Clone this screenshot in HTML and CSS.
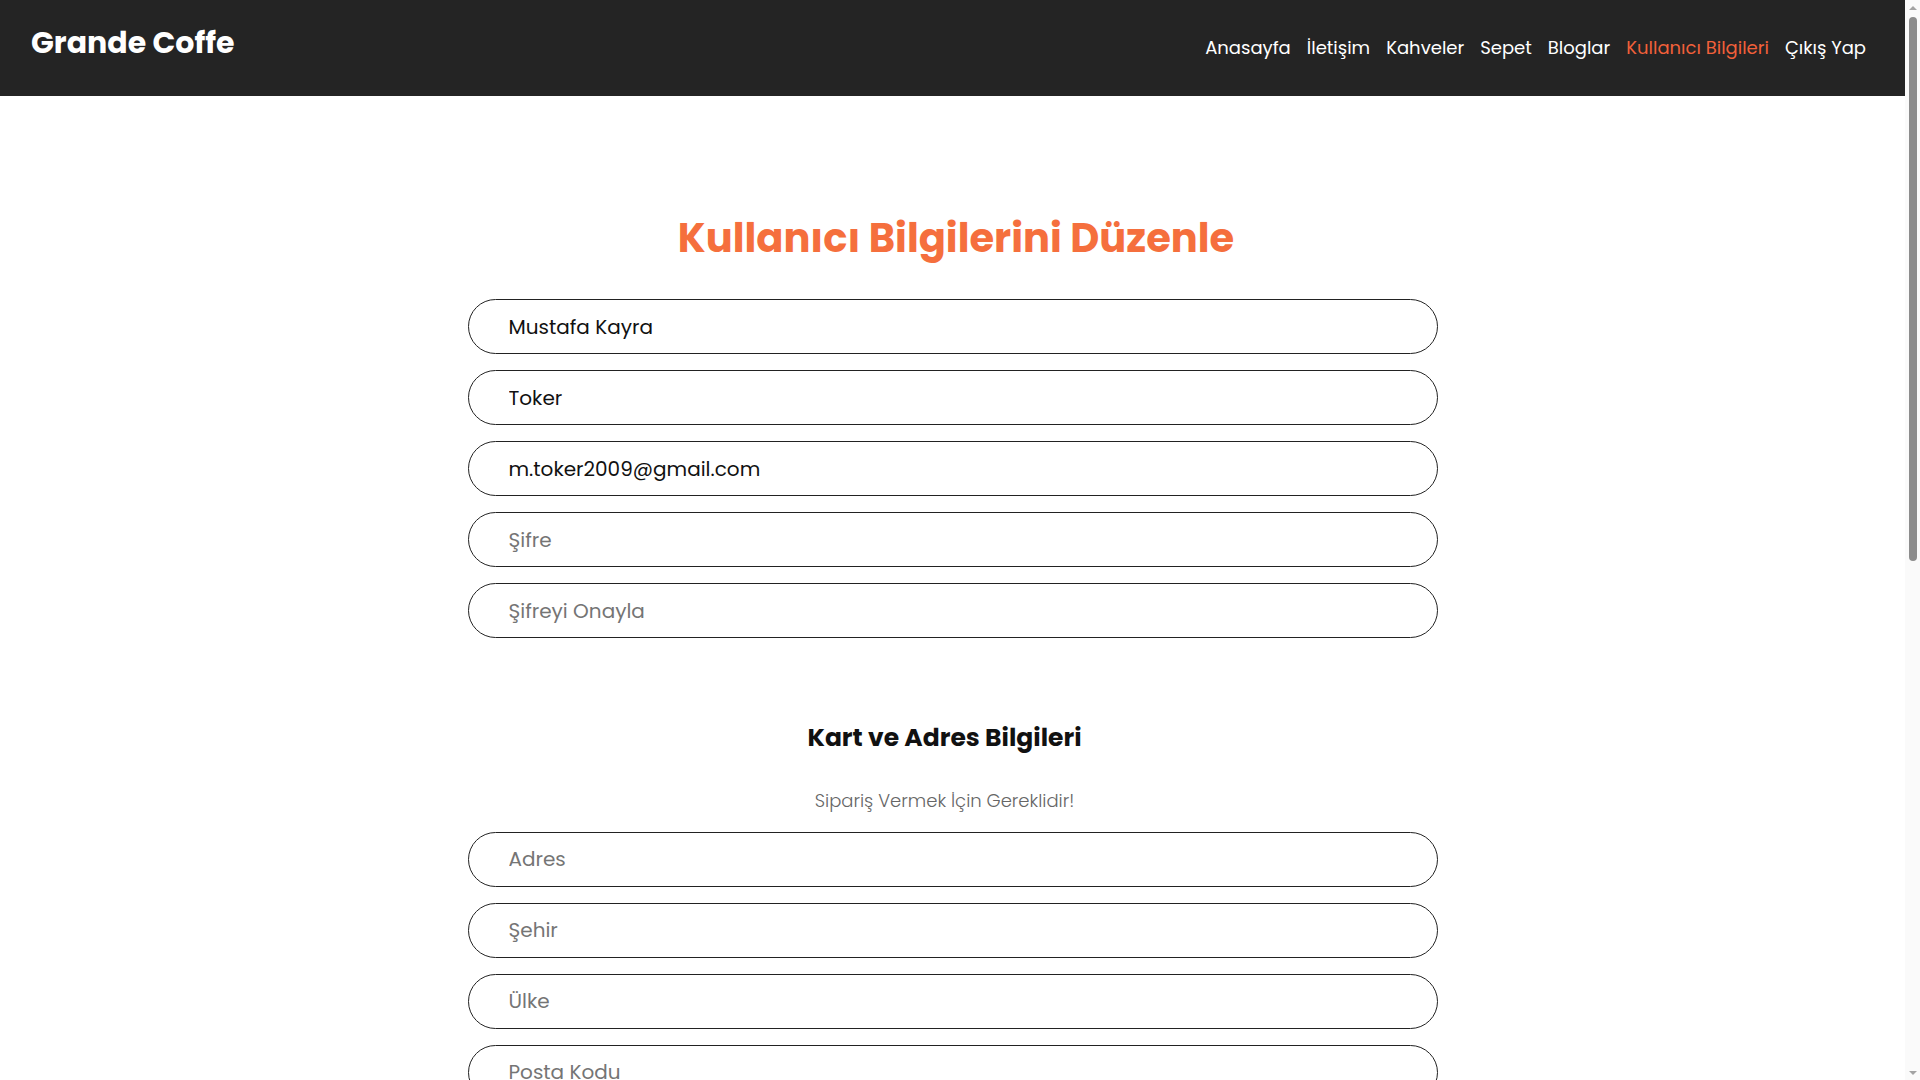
FILE: index.html
```html
<!DOCTYPE html>
<html lang="tr">
<head>
<meta charset="utf-8">
<title>Grande Coffe - Kullanıcı Bilgileri</title>
<link rel="stylesheet" href="styles.css">
</head>
<body>
<header class="topbar">
  <a class="logo" href="#">Grande Coffe</a>
  <nav class="menu">
    <a href="#">Anasayfa</a>
    <a href="#">İletişim</a>
    <a href="#">Kahveler</a>
    <a href="#">Sepet</a>
    <a href="#">Bloglar</a>
    <a href="#" class="active">Kullanıcı Bilgileri</a>
    <a href="#">Çıkış Yap</a>
  </nav>
</header>
<main class="content">
  <h1 class="title">Kullanıcı Bilgilerini Düzenle</h1>
  <form class="form">
    <input class="field" type="text" value="Mustafa Kayra" placeholder="Ad">
    <input class="field" type="text" value="Toker" placeholder="Soyad">
    <input class="field" type="email" value="m.toker2009@gmail.com" placeholder="E-posta">
    <input class="field" type="password" placeholder="Şifre">
    <input class="field" type="password" placeholder="Şifreyi Onayla">

    <h2 class="subtitle">Kart ve Adres Bilgileri</h2>
    <p class="note">Sipariş Vermek İçin Gereklidir!</p>

    <input class="field" type="text" placeholder="Adres">
    <input class="field" type="text" placeholder="Şehir">
    <input class="field" type="text" placeholder="Ülke">
    <input class="field" type="text" placeholder="Posta Kodu">
    <input class="field" type="text" placeholder="Kart Numarası">
    <input class="field" type="text" placeholder="Kart Üzerindeki İsim">
    <input class="field" type="text" placeholder="Son Kullanma Tarihi">
    <input class="field" type="text" placeholder="CVV">
    <button class="submit" type="button">Bilgileri Güncelle</button>
  </form>
</main>
<footer class="footer">
  <p>© 2024 Grande Coffe</p>
</footer>
<div class="scrollbar" aria-hidden="true">
  <span class="sb-arrow sb-up"></span>
  <span class="sb-track"><span class="sb-thumb"></span></span>
  <span class="sb-arrow sb-down"></span>
</div>
</body>
</html>
```

FILE: styles.css
```css
* { box-sizing: border-box; }

html, body {
  margin: 0;
  padding: 0;
}

body {
  font-family: "Poppins", "Inter", "DejaVu Sans", sans-serif;
  background: #ffffff;
  color: #111111;
  padding-right: 15px;
}

/* browser scrollbar look-alike */
.scrollbar {
  position: fixed;
  top: 0;
  right: 0;
  width: 15px;
  height: 100vh;
  background: #fafafa;
  display: flex;
  flex-direction: column;
  align-items: center;
}

.sb-arrow {
  flex: 0 0 15px;
  width: 15px;
  display: flex;
  justify-content: center;
}

.sb-up {
  align-items: flex-end;
  padding-bottom: 5px;
}

.sb-up::before {
  content: "";
  border-left: 4px solid transparent;
  border-right: 4px solid transparent;
  border-bottom: 4px solid #a3a3a3;
}

.sb-down {
  align-items: flex-start;
  padding-top: 6px;
}

.sb-down::before {
  content: "";
  border-left: 4px solid transparent;
  border-right: 4px solid transparent;
  border-top: 4px solid #a3a3a3;
}

.sb-track {
  flex: 1;
  width: 15px;
  display: flex;
  justify-content: center;
  padding-top: 2px;
}

.sb-thumb {
  width: 8px;
  height: 544px;
  background: #8c8c8c;
  border-radius: 4px;
}

.topbar {
  height: 96px;
  background: #242424;
  display: flex;
  align-items: center;
  justify-content: space-between;
  padding: 0 39px 0 31px;
}

.logo {
  color: #ffffff;
  text-decoration: none;
  font-weight: 700;
  font-size: 30px;
  margin-top: -10px;
}

.menu {
  display: flex;
  gap: 16px;
  margin-top: -2px;
}

.menu a {
  color: #ffffff;
  text-decoration: none;
  font-size: 18px;
}

.menu a.active {
  color: #f2603a;
}

.content {
  display: flex;
  flex-direction: column;
  align-items: center;
  padding-top: 118px;
}

.title {
  margin: 0 0 37px;
  padding-left: 7px;
  color: #f56f3d;
  font-size: 40px;
  font-weight: 700;
  line-height: 48px;
}

.form {
  width: 970px;
  display: flex;
  flex-direction: column;
  align-items: center;
}

.field {
  width: 100%;
  height: 55px;
  margin-bottom: 16px;
  border: 1px solid #222222;
  border-radius: 28px;
  padding: 0 40px;
  font-family: inherit;
  font-size: 20px;
  color: #111111;
  background: #ffffff;
  outline: none;
}

.field::placeholder {
  color: #757575;
}

.subtitle {
  margin: 68px 0 0;
  padding-right: 16px;
  font-size: 25px;
  font-weight: 700;
  color: #111111;
  line-height: 1.3;
}

.note {
  margin: 32px 0 18px;
  padding-right: 16px;
  font-size: 18px;
  font-weight: 300;
  color: #666666;
}

.submit {
  margin-top: 20px;
  height: 55px;
  padding: 0 48px;
  border: none;
  border-radius: 28px;
  background: #f56f3d;
  color: #ffffff;
  font-family: inherit;
  font-size: 20px;
  font-weight: 600;
}

.footer {
  margin-top: 140px;
  height: 460px;
  background: #242424;
  color: #ffffff;
  display: flex;
  align-items: center;
  justify-content: center;
}
```
